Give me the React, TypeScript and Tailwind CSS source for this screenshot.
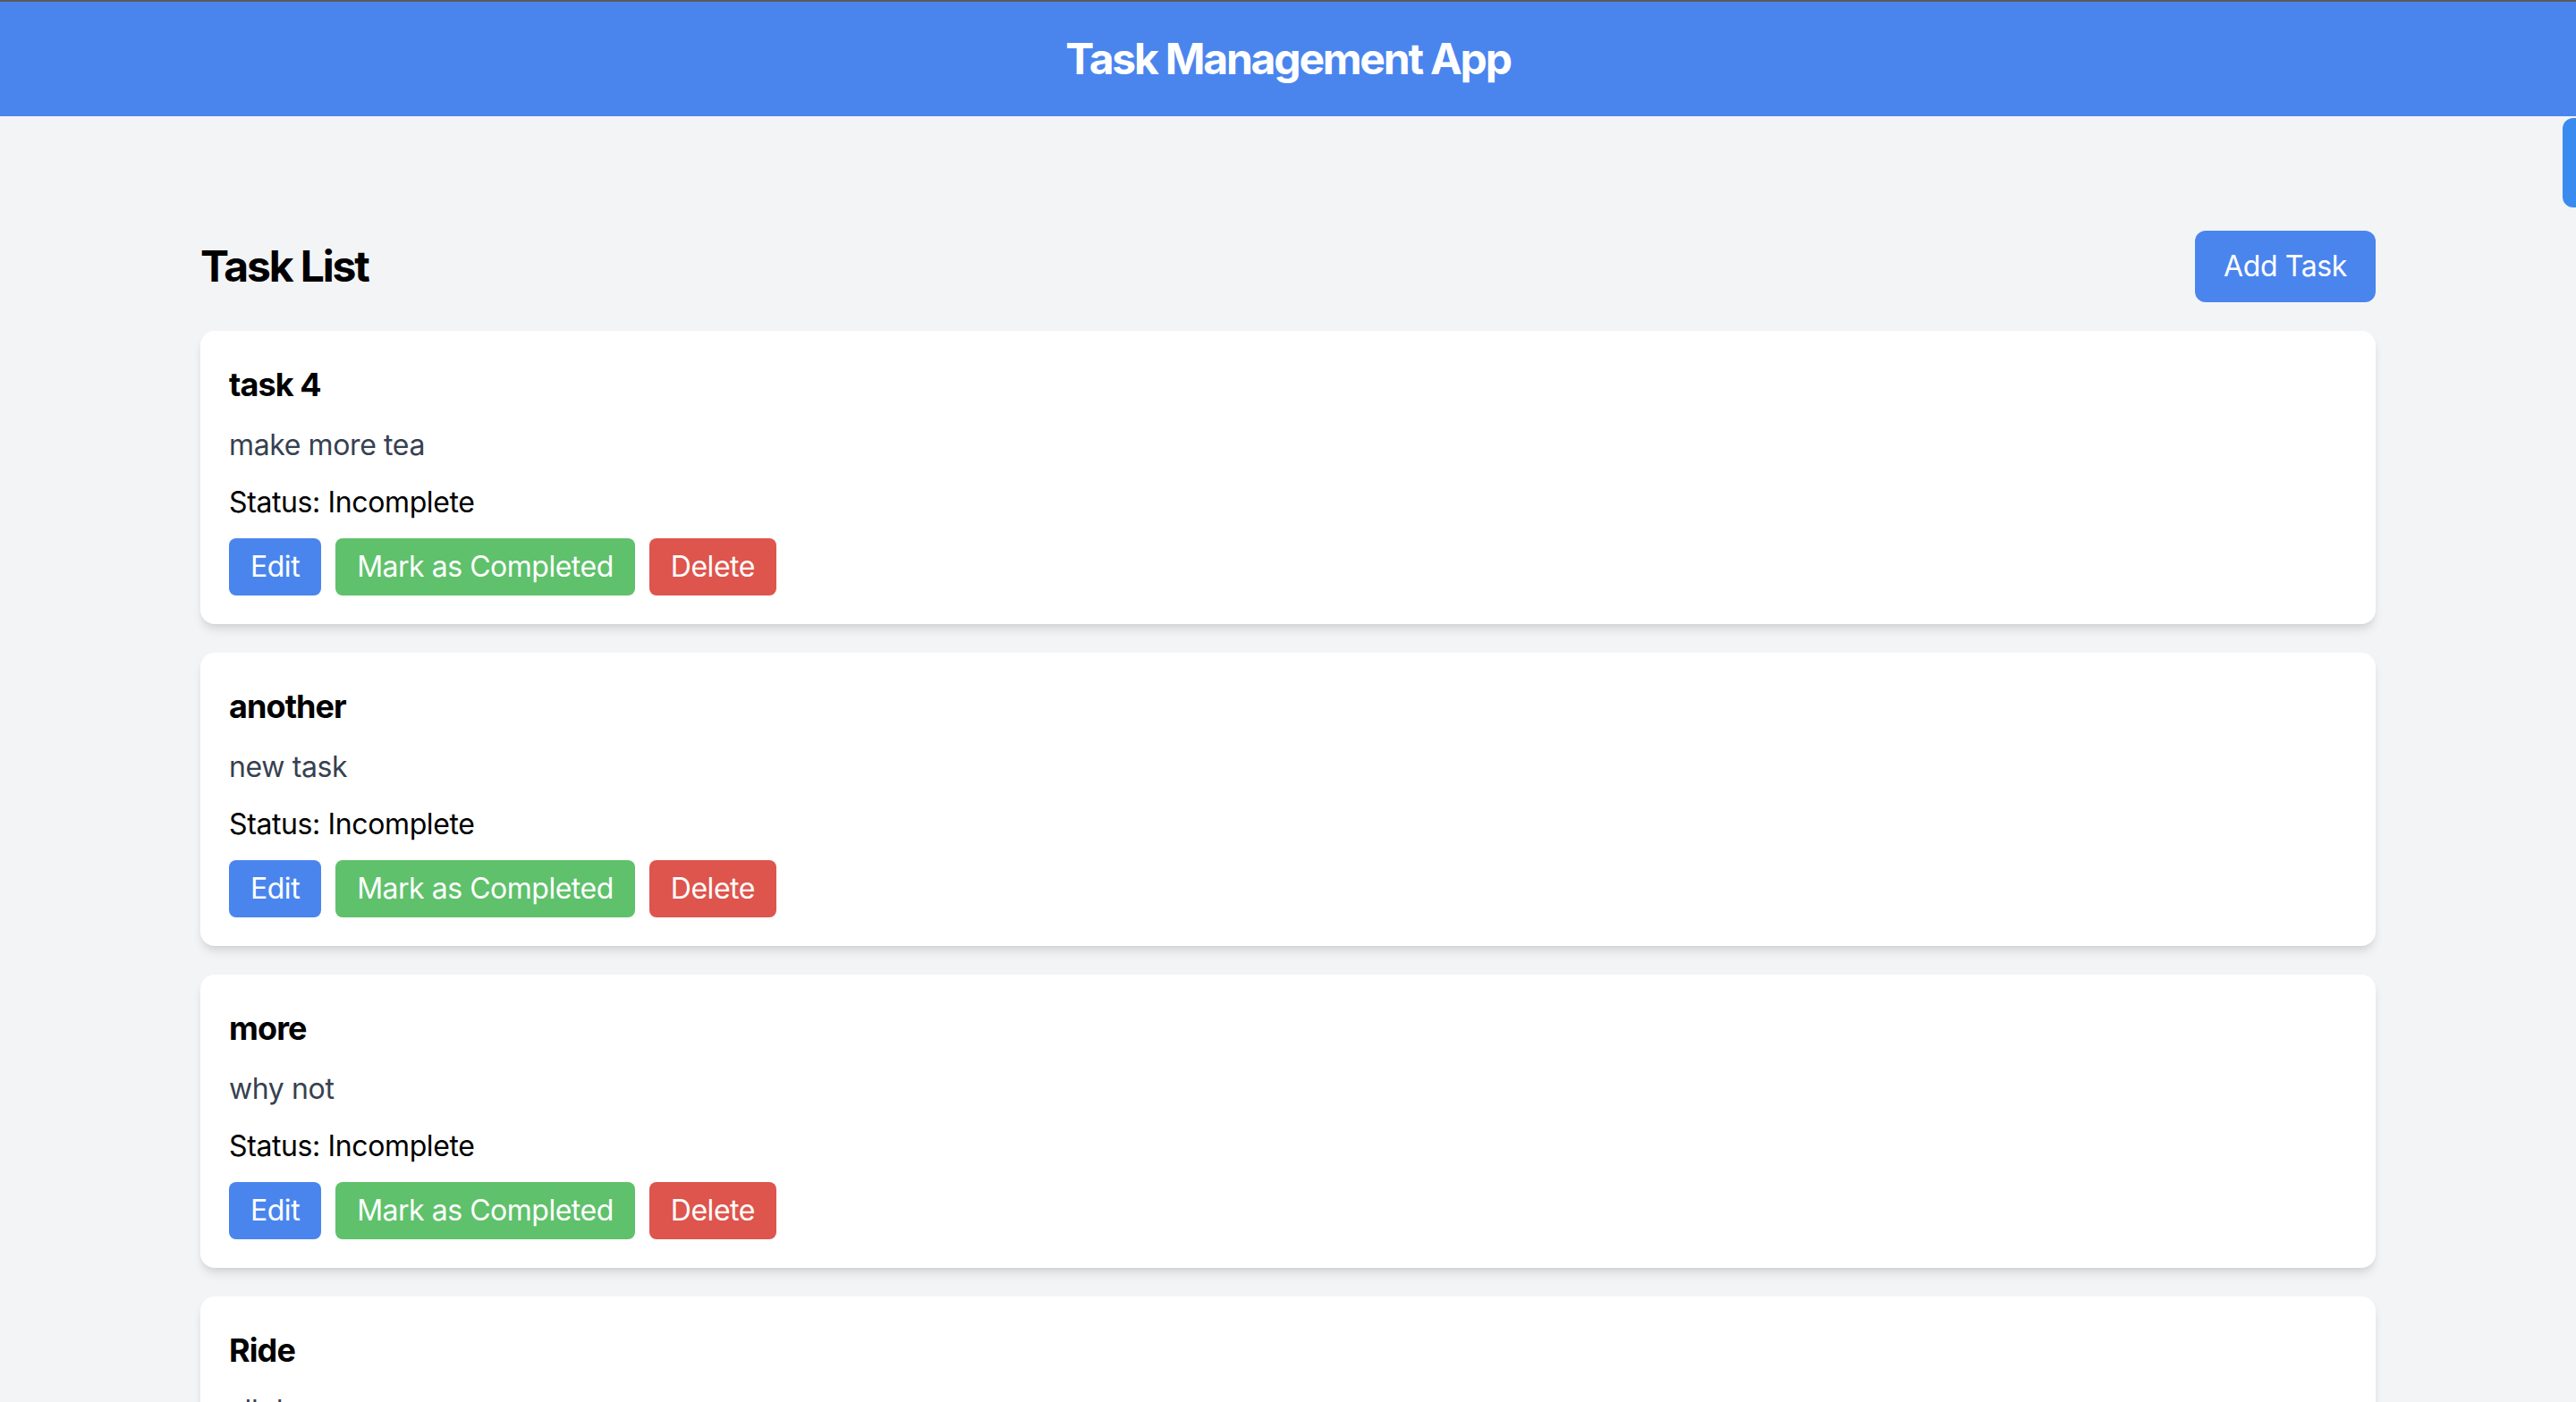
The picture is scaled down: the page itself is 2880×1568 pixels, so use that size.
const tasks = [
  { title: 'task 4', description: 'make more tea' },
  { title: 'another', description: 'new task' },
  { title: 'more', description: 'why not' },
  { title: 'Ride', description: 'all day' },
];

function TaskCard({ title, description }: { title: string; description: string }) {
  return (
    <div className="bg-white rounded-[16px] p-8 shadow-[0_8px_12px_-2px_rgba(0,0,0,0.1),0_4px_8px_-4px_rgba(0,0,0,0.1)]">
      <h3 className="text-[36px] leading-[56px] font-bold text-black mb-4 tracking-[-0.025em]">{title}</h3>
      <p className="text-[32px] leading-[48px] text-[#374151] mb-4">{description}</p>
      <p className="text-[32px] leading-[48px] text-black">Status: Incomplete</p>
      <div className="flex gap-4 mt-4 tracking-[-0.03em]">
        <button className="bg-[#4a85ee] text-white text-[32px] leading-[48px] px-6 py-2 rounded-[8px]">
          Edit
        </button>
        <button className="bg-[#5fc16b] text-white text-[32px] leading-[48px] px-6 py-2 rounded-[8px]">
          Mark as Completed
        </button>
        <button className="bg-[#de554d] text-white text-[32px] leading-[48px] px-6 py-2 rounded-[8px]">
          Delete
        </button>
      </div>
    </div>
  );
}

export default function App() {
  return (
    <div className="min-h-screen bg-[#f3f4f6] font-['Inter',sans-serif] tracking-[-0.024em] relative border-t-2 border-[#5b5b5e]">
      <header className="bg-[#4a85ee] py-8 text-center">
        <h1 className="text-white text-[48px] leading-[64px] font-bold tracking-[-0.046em]">Task Management App</h1>
      </header>

      <div className="absolute right-0 top-[130px] w-[15px] h-[100px] bg-[#3a8bf0] rounded-l-[12px]"></div>

      <main className="max-w-[2560px] mx-auto px-16 pt-[128px]">
        <div className="flex items-center justify-between mb-8">
          <h2 className="text-[48px] leading-[64px] font-bold text-black tracking-[-0.045em]">Task List</h2>
          <button className="bg-[#4a85ee] text-white text-[32px] leading-[48px] px-8 py-4 rounded-[12px]">
            Add Task
          </button>
        </div>

        <div className="flex flex-col gap-8">
          {tasks.map((t) => (
            <TaskCard key={t.title} title={t.title} description={t.description} />
          ))}
        </div>
      </main>
    </div>
  );
}
